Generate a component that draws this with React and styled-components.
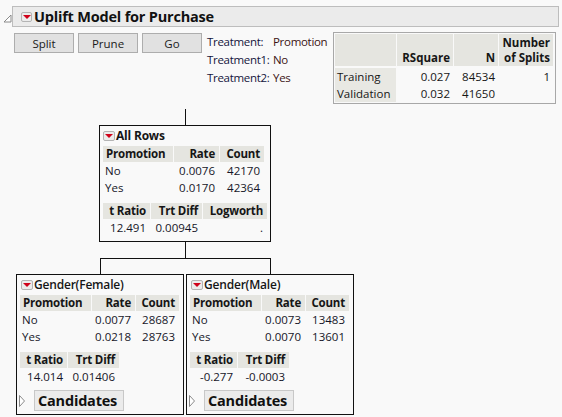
import React from "react";
import styled, { createGlobalStyle } from "styled-components";

const GlobalStyle = createGlobalStyle`
  html, body { margin: 0; padding: 0; background: #f9f9f9; }
  body {
    font-family: "Open Sans", "Noto Sans", sans-serif;
    font-size: 11.5px;
    color: #161616;
  }
  * { box-sizing: border-box; }
`;

const Page = styled.div`
  width: 562px;
  height: 417px;
  padding-top: 6px;
  overflow: hidden;
`;

const OutlineRow = styled.div`
  display: flex;
  align-items: center;
  height: 21px;
  padding-left: 3px;
`;

const OpenTriangle = styled.svg`
  width: 9px;
  height: 9px;
  margin-top: 3px;
  flex: none;
`;

const HeaderBar = styled.div`
  flex: 1;
  margin-right: 3px;
  height: 21px;
  background: #ebebeb;
  border: 1px solid #bdbdbd;
  display: flex;
  align-items: center;
  padding-left: 8px;
  gap: 2px;
`;

const Title = styled.span`
  font-weight: 700;
  font-size: 14.5px;
  letter-spacing: -0.2px;
  color: #111;
`;

const RedMenu = styled.span`
  display: inline-flex;
  align-items: center;
  justify-content: center;
  width: ${(p) => (p.$big ? 11 : 12)}px;
  height: 10px;
  background: #ececec;
  border: 1px solid #b4b4b4;
  border-radius: 2px;
  flex: none;
  &::after {
    content: "";
    display: block;
    width: 0;
    height: 0;
    border-left: 4px solid transparent;
    border-right: 4px solid transparent;
    border-top: 4px solid #d0021b;
    margin-top: 1px;
  }
`;

const TopRow = styled.div`
  display: flex;
  align-items: flex-start;
  margin-top: 5px;
  padding-left: 14px;
`;

const ButtonGroup = styled.div`
  display: flex;
  gap: 4px;
  margin-top: 1px;
`;

const Button = styled.div`
  width: 60px;
  height: 20px;
  background: #e1e1e1;
  border: 1px solid #adadad;
  display: flex;
  align-items: center;
  justify-content: center;
  font-size: 11.5px;
  color: #1a1a1a;
`;

const TreatmentInfo = styled.div`
  width: 126px;
  margin-left: 5px;
  margin-top: 1px;
  display: grid;
  grid-template-columns: 66px auto;
  line-height: 18px;
  white-space: nowrap;
  letter-spacing: -0.3px;
`;

const InfoLabel = styled.span`
  color: #14143c;
`;

const InfoValue = styled.span`
  color: #3c1414;
`;

const SummaryTable = styled.div`
  width: 223px;
  border: 1px solid #a8a8a8;
  padding: 1px;
  display: grid;
  grid-template-columns: 61px 56px 44px 54px;
  column-gap: 1px;
`;

const SumHead = styled.div`
  height: 32px;
  background: #e5e5e0;
  font-weight: 700;
  text-align: right;
  display: flex;
  align-items: flex-end;
  justify-content: flex-end;
  padding: 0 3px 1px 3px;
  line-height: 15px;
  margin-bottom: 2px;
`;

const SumCell = styled.div`
  height: 17px;
  line-height: 17px;
  text-align: ${(p) => (p.$left ? "left" : "right")};
  padding: 0 ${(p) => (p.$left ? "2px" : "3px")};
  background: ${(p) => (p.$label ? "#e8e8e3" : "transparent")};
  white-space: nowrap;
`;

const Tree = styled.div`
  display: flex;
  flex-direction: column;
  align-items: flex-start;
  margin-top: 5px;
  margin-left: 16px;
  width: 338px;
`;

const Stem = styled.div`
  width: 1px;
  height: 16px;
  background: #111;
  margin-left: ${(p) => p.$x}px;
`;

const Branch = styled.div`
  width: 171px;
  height: 16px;
  margin-left: 84px;
  border: 1px solid #111;
  border-bottom: none;
`;

const Children = styled.div`
  display: flex;
  gap: 2px;
`;

const Node = styled.div`
  width: ${(p) => p.$w}px;
  margin-left: ${(p) => p.$x || 0}px;
  border: 1px solid #111;
  padding: 1px 3px ${(p) => p.$pb}px 3px;
  display: flex;
  flex-direction: column;
  align-items: flex-start;
`;

const NodeTitle = styled.div`
  display: flex;
  align-items: center;
  height: 17px;
  gap: 1px;
  font-weight: ${(p) => (p.$bold ? 700 : 600)};
  font-size: 12px;
  letter-spacing: -0.2px;
  margin-left: ${(p) => p.$indent || 0}px;
  white-space: nowrap;
`;

const Stats = styled.div`
  display: grid;
  grid-template-columns: ${(p) => p.$cols};
  column-gap: 1px;
  margin-top: ${(p) => p.$mt}px;
`;

const Head = styled.div`
  height: 16px;
  line-height: 16px;
  background: #e5e5e0;
  font-weight: 700;
  letter-spacing: -0.2px;
  padding: 0 4px 0 3px;
  text-align: ${(p) => (p.$left ? "left" : "right")};
  white-space: nowrap;
`;

const Cell = styled.div`
  height: 17px;
  line-height: 17px;
  padding: 0 4px 0 2px;
  text-align: ${(p) => (p.$left ? "left" : "right")};
  white-space: nowrap;
  color: #161628;
`;

const CandRow = styled.div`
  display: flex;
  align-items: center;
  margin-top: 5px;
  margin-left: -1px;
  gap: 9px;
`;

const ClosedTriangle = styled.svg`
  width: 6px;
  height: 12px;
  flex: none;
`;

const CandBox = styled.div`
  width: 90px;
  height: 21px;
  background: #ebebeb;
  border: 1px solid #c8c8c8;
  font-weight: 700;
  font-size: 14.5px;
  letter-spacing: -0.2px;
  display: flex;
  align-items: center;
  padding-left: 3px;
  color: #111;
`;

function Leaf({ title, rows, t, d }) {
  return (
    <Node $w={168} $pb={3}>
      <NodeTitle $indent={1}>
        <RedMenu />
        {title}
      </NodeTitle>
      <Stats $cols="71px 43px 43px" $mt={2}>
        <Head $left>Promotion</Head>
        <Head>Rate</Head>
        <Head>Count</Head>
        {rows.map((r) => (
          <React.Fragment key={r[0]}>
            <Cell $left>{r[0]}</Cell>
            <Cell>{r[1]}</Cell>
            <Cell>{r[2]}</Cell>
          </React.Fragment>
        ))}
      </Stats>
      <Stats $cols="47px 51px" $mt={7}>
        <Head>t Ratio</Head>
        <Head>Trt Diff</Head>
        <Cell>{t}</Cell>
        <Cell>{d}</Cell>
      </Stats>
      <CandRow>
        <ClosedTriangle viewBox="0 0 6 12">
          <polygon points="0.5,0.5 5.5,6 0.5,11.5" fill="#fff" stroke="#8a8a8a" strokeWidth="1" />
        </ClosedTriangle>
        <CandBox>Candidates</CandBox>
      </CandRow>
    </Node>
  );
}

export default function App() {
  return (
    <Page>
      <GlobalStyle />
      <OutlineRow>
        <OpenTriangle viewBox="0 0 9 9">
          <polygon points="8,1 8,8 1,8" fill="#fff" stroke="#8a8a8a" strokeWidth="1" />
        </OpenTriangle>
        <HeaderBar>
          <RedMenu $big />
          <Title>Uplift Model for Purchase</Title>
        </HeaderBar>
      </OutlineRow>

      <TopRow>
        <ButtonGroup>
          <Button>Split</Button>
          <Button>Prune</Button>
          <Button>Go</Button>
        </ButtonGroup>
        <TreatmentInfo>
          <InfoLabel>Treatment:</InfoLabel>
          <InfoValue>Promotion</InfoValue>
          <InfoLabel>Treatment1:</InfoLabel>
          <InfoValue>No</InfoValue>
          <InfoLabel>Treatment2:</InfoLabel>
          <InfoValue>Yes</InfoValue>
        </TreatmentInfo>
        <SummaryTable>
          <SumHead />
          <SumHead>RSquare</SumHead>
          <SumHead>N</SumHead>
          <SumHead>
            Number
            <br />
            of Splits
          </SumHead>
          <SumCell $left $label>Training</SumCell>
          <SumCell>0.027</SumCell>
          <SumCell>84534</SumCell>
          <SumCell>1</SumCell>
          <SumCell $left $label>Validation</SumCell>
          <SumCell>0.032</SumCell>
          <SumCell>41650</SumCell>
          <SumCell />
        </SummaryTable>
      </TopRow>

      <Tree>
        <Stem $x={169} />
        <Node $w={172} $x={83} $pb={5}>
          <NodeTitle $bold>
            <RedMenu />
            All Rows
          </NodeTitle>
          <Stats $cols="70px 45px 44px" $mt={2}>
            <Head $left>Promotion</Head>
            <Head>Rate</Head>
            <Head>Count</Head>
            <Cell $left>No</Cell>
            <Cell>0.0076</Cell>
            <Cell>42170</Cell>
            <Cell $left>Yes</Cell>
            <Cell>0.0170</Cell>
            <Cell>42364</Cell>
          </Stats>
          <Stats $cols="47px 51px 64px" $mt={7}>
            <Head>t Ratio</Head>
            <Head>Trt Diff</Head>
            <Head>Logworth</Head>
            <Cell>12.491</Cell>
            <Cell>0.00945</Cell>
            <Cell>.</Cell>
          </Stats>
        </Node>
        <Stem $x={169} />
        <Branch />
        <Children>
          <Leaf
            title="Gender(Female)"
            rows={[
              ["No", "0.0077", "28687"],
              ["Yes", "0.0218", "28763"],
            ]}
            t="14.014"
            d="0.01406"
          />
          <Leaf
            title="Gender(Male)"
            rows={[
              ["No", "0.0073", "13483"],
              ["Yes", "0.0070", "13601"],
            ]}
            t="-0.277"
            d="-0.0003"
          />
        </Children>
      </Tree>
    </Page>
  );
}
